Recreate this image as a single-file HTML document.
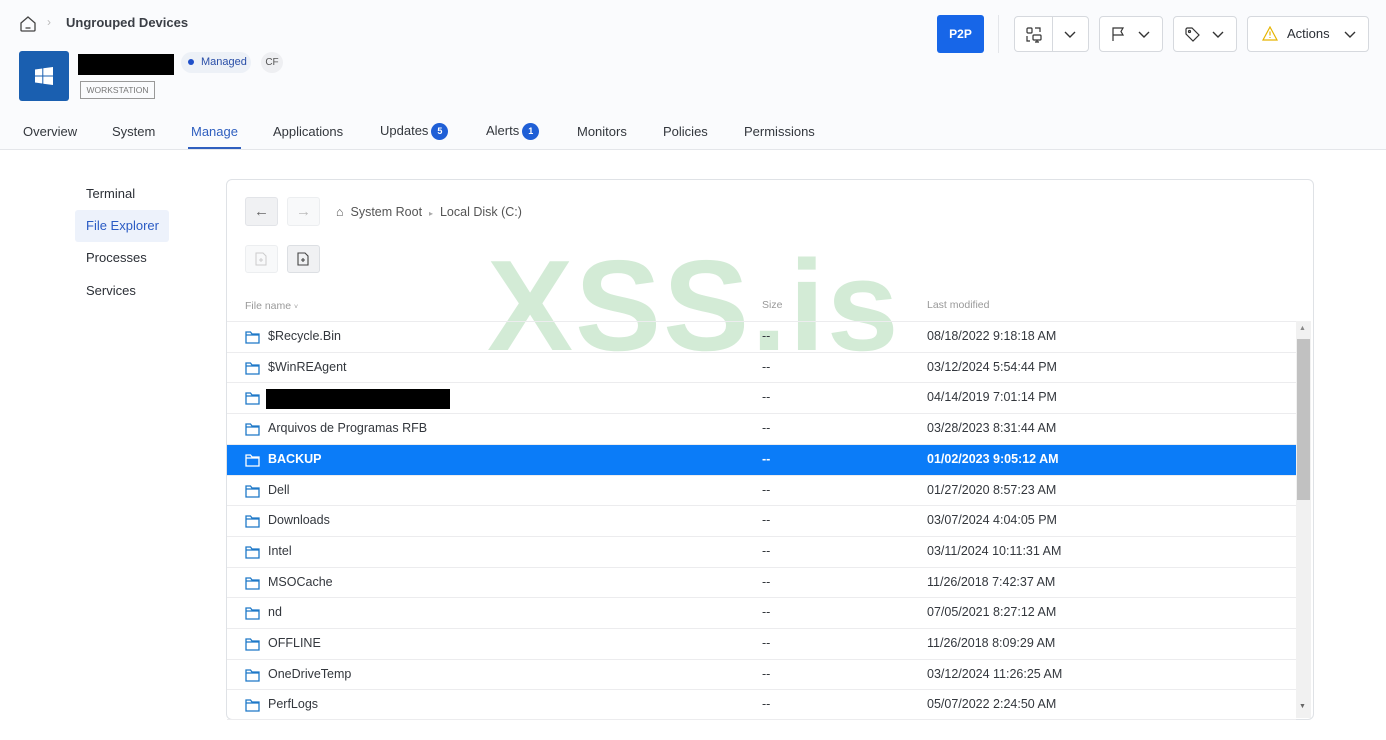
<!DOCTYPE html>
<html><head><meta charset="utf-8"><style>
*{box-sizing:border-box;margin:0;padding:0}
body{width:1386px;height:740px;overflow:hidden;background:#fff;font-family:"Liberation Sans",sans-serif;color:#2b2f36;position:relative}
.top{position:absolute;left:0;top:0;width:1386px;height:150px;background:#fafbfd;border-bottom:1px solid #e4e6ea}
.abs{position:absolute}
.btn{position:absolute;top:16px;height:36px;border:1px solid #d6d9de;border-radius:4px;background:#fff}
.tab{position:absolute;top:124px;font-size:13px;color:#33373d}
.badge{display:inline-block;width:17px;height:17px;border-radius:50%;background:#1f5fd6;color:#fff;font-size:9px;font-weight:bold;text-align:center;line-height:17px;vertical-align:middle;margin-left:3px}
.side{position:absolute;left:86px;font-size:13px;color:#2b2f36}
.panel{position:absolute;left:226px;top:179px;width:1088px;height:541px;border:1px solid #dfe2e6;border-radius:6px;background:#fff}
.row{position:absolute;left:227px;width:1069px;height:31px;border-top:1px solid #ececee;font-size:12.5px;color:#33373d}
.row span{position:absolute;top:7px}
.row svg{position:absolute;left:18px;top:8px}
.sel{background:#0b7cf8;color:#fff;font-weight:bold}
</style></head><body>
<div class="top"></div>
<svg class="abs" style="left:19px;top:15px" width="18" height="18" viewBox="0 0 18 18"><path d="M2 8 L9 2 L16 8 V15 Q16 16 15 16 H3 Q2 16 2 15 Z" fill="none" stroke="#444" stroke-width="1.3"/><path d="M6.5 13H11.5" stroke="#444" stroke-width="1.3"/></svg>
<div class="abs" style="left:47px;top:15px;font-size:12px;color:#bbb">›</div>
<div class="abs" style="left:66px;top:15px;font-size:13px;font-weight:bold;color:#3a3e45">Ungrouped Devices</div>
<div class="abs" style="left:19px;top:51px;width:50px;height:50px;border-radius:3px;background:#1a5fb0"></div>
<svg class="abs" style="left:35px;top:67px" width="18" height="18" viewBox="0 0 18 18" fill="#fff"><path d="M0 2.5L7.3 1.5V8.5H0Z M8.3 1.3L18 0V8.5H8.3Z M0 9.5H7.3V16.5L0 15.5Z M8.3 9.5H18V18L8.3 16.7Z"/></svg>
<div class="abs" style="left:78px;top:54px;width:96px;height:21px;background:#000"></div>
<div class="abs" style="left:181px;top:52px;width:70px;height:21px;border-radius:11px;background:#edf1f7;font-size:11px;color:#2a4fa8;line-height:21px;padding-left:20px">Managed</div>
<div class="abs" style="left:188px;top:59px;width:6px;height:6px;border-radius:50%;background:#1f4fc9"></div>
<div class="abs" style="left:261px;top:52px;width:22px;height:21px;border-radius:50%;background:#eeeff2;font-size:10px;color:#555;line-height:21px;text-align:center">CF</div>
<div class="abs" style="left:80px;top:81px;width:75px;height:18px;border:1px solid #999;font-size:8.5px;color:#777;line-height:16px;text-align:center">WORKSTATION</div>
<div class="abs" style="left:937px;top:15px;width:47px;height:38px;background:#1766e8;border-radius:3px;color:#fff;font-weight:bold;font-size:12px;line-height:38px;text-align:center">P2P</div>
<div class="abs" style="left:998px;top:15px;width:1px;height:38px;background:#e4e6ea"></div>
<div class="btn" style="left:1014px;width:75px"><div class="abs" style="left:37px;top:0;width:1px;height:34px;background:#d6d9de"></div>
<svg class="abs" style="left:10px;top:9px" width="18" height="18" viewBox="0 0 18 18" fill="none" stroke="#333" stroke-width="1.2"><rect x="2" y="2" width="5" height="5" rx="1"/><path d="M10 2h5v4M2 10v5h3"/><rect x="8" y="9" width="8" height="5" rx="1"/><path d="M12 14v2M10 16h4"/></svg>
<svg class="abs" style="left:49px;top:12px" width="12" height="10" viewBox="0 0 12 10"><path d="M1 3l5 5 5-5" fill="none" stroke="#333" stroke-width="1.4"/></svg></div>
<div class="btn" style="left:1099px;width:64px"><svg class="abs" style="left:10px;top:9px" width="16" height="16" viewBox="0 0 16 16" fill="none" stroke="#333" stroke-width="1.2"><path d="M3 15V2h10l-2 3.5 2 3.5H3"/></svg>
<svg class="abs" style="left:38px;top:12px" width="12" height="10" viewBox="0 0 12 10"><path d="M1 3l5 5 5-5" fill="none" stroke="#333" stroke-width="1.4"/></svg></div>
<div class="btn" style="left:1173px;width:64px"><svg class="abs" style="left:10px;top:9px" width="17" height="17" viewBox="0 0 17 17" fill="none" stroke="#333" stroke-width="1.2"><path d="M2 3V8l7 7 6-6-7-7H3Z"/><circle cx="5.5" cy="5.5" r="1"/></svg>
<svg class="abs" style="left:38px;top:12px" width="12" height="10" viewBox="0 0 12 10"><path d="M1 3l5 5 5-5" fill="none" stroke="#333" stroke-width="1.4"/></svg></div>
<div class="btn" style="left:1247px;width:122px"><svg class="abs" style="left:14px;top:9px" width="16" height="15" viewBox="0 0 16 15" fill="none" stroke="#e6b400" stroke-width="1.2"><path d="M8 1L15 14H1Z M8 5.5v4M8 11v1"/></svg>
<span class="abs" style="left:39px;top:9px;font-size:13px;color:#2b2f36">Actions</span>
<svg class="abs" style="left:96px;top:12px" width="12" height="10" viewBox="0 0 12 10"><path d="M1 3l5 5 5-5" fill="none" stroke="#333" stroke-width="1.4"/></svg></div>
<div class="tab" style="left:23px">Overview</div>
<div class="tab" style="left:112px">System</div>
<div class="tab" style="left:191px;color:#2f5fbf">Manage</div>
<div class="abs" style="left:188px;top:147px;width:53px;height:2px;background:#2f5fbf"></div>
<div class="tab" style="left:273px">Applications</div>
<div class="tab" style="left:380px;top:123px">Updates<span class="badge">5</span></div>
<div class="tab" style="left:486px;top:123px">Alerts<span class="badge">1</span></div>
<div class="tab" style="left:577px">Monitors</div>
<div class="tab" style="left:663px">Policies</div>
<div class="tab" style="left:744px">Permissions</div>
<div class="side" style="top:186px">Terminal</div>
<div class="abs" style="left:75px;top:210px;width:94px;height:32px;background:#edf2fb;border-radius:3px"></div>
<div class="side" style="top:218px;color:#2a5bc4">File Explorer</div>
<div class="side" style="top:250px">Processes</div>
<div class="side" style="top:283px">Services</div>
<div class="panel"></div>
<div class="abs" style="left:245px;top:197px;width:33px;height:29px;background:#f0f1f3;border:1px solid #e2e4e8;border-radius:3px;text-align:center;line-height:27px;color:#666;font-size:15px">←</div>
<div class="abs" style="left:287px;top:197px;width:33px;height:29px;background:#f8f9fa;border:1px solid #eceef0;border-radius:3px;text-align:center;line-height:27px;color:#bbb;font-size:15px">→</div>
<div class="abs" style="left:336px;top:205px;font-size:12.5px;color:#555">⌂&nbsp; System Root &nbsp;<span style="color:#aaa;font-size:8px">▸</span>&nbsp; Local Disk (C:)</div>
<div class="abs" style="left:245px;top:245px;width:33px;height:28px;background:#f8f9fa;border:1px solid #eceef0;border-radius:3px"></div>
<div class="abs" style="left:287px;top:245px;width:33px;height:28px;background:#f0f1f3;border:1px solid #dcdfe3;border-radius:3px"></div>
<svg class="abs" style="left:255px;top:252px" width="12" height="14" viewBox="0 0 12 14" fill="none" stroke="#ccc" stroke-width="1"><path d="M1 1h7l3 3v9H1Z M6 6v4M4 8h4"/></svg>
<svg class="abs" style="left:297px;top:252px" width="12" height="14" viewBox="0 0 12 14" fill="none" stroke="#444" stroke-width="1.1"><path d="M1 1h7l3 3v9H1Z M6 6v4M4 8h4"/></svg>
<div class="abs" style="left:487px;top:242px;font-size:129px;font-weight:bold;color:#d3ebd6;letter-spacing:2px;line-height:1.0">XSS.is</div>
<div class="abs" style="left:245px;top:300px;font-size:10.5px;color:#999">File name <span style="font-size:7px">˅</span></div>
<div class="abs" style="left:762px;top:299px;font-size:10.5px;color:#999">Size</div>
<div class="abs" style="left:927px;top:299px;font-size:10.5px;color:#999">Last modified</div>
<div id="rows"></div>
<div class="abs" style="left:227px;top:719px;width:1069px;height:1px;background:#ececee"></div>
<div class="abs" style="left:1296px;top:321px;width:15px;height:397px;background:#f1f1f1"></div>
<div class="abs" style="left:1297px;top:339px;width:13px;height:161px;background:#c1c1c1"></div>
<div class="abs" style="left:1299px;top:325px;font-size:7px;color:#888">▲</div>
<div class="abs" style="left:1299px;top:703px;font-size:7px;color:#666">▼</div>
<script>
var d=[["$Recycle.Bin","08/18/2022 9:18:18 AM"],["$WinREAgent","03/12/2024 5:54:44 PM"],["","04/14/2019 7:01:14 PM"],["Arquivos de Programas RFB","03/28/2023 8:31:44 AM"],["BACKUP","01/02/2023 9:05:12 AM"],["Dell","01/27/2020 8:57:23 AM"],["Downloads","03/07/2024 4:04:05 PM"],["Intel","03/11/2024 10:11:31 AM"],["MSOCache","11/26/2018 7:42:37 AM"],["nd","07/05/2021 8:27:12 AM"],["OFFLINE","11/26/2018 8:09:29 AM"],["OneDriveTemp","03/12/2024 11:26:25 AM"],["PerfLogs","05/07/2022 2:24:50 AM"]];
var h="";d.forEach(function(r,i){var t=321+i*30.7,s=i==4,c=s?"#fff":"#1d78c8";
h+='<div class="row'+(s?' sel':'')+'" style="top:'+t+'px"><svg width="15" height="14" viewBox="0 0 15 14" fill="none" stroke="'+c+'" stroke-width="1.3"><path d="M1 2h4.5l1.5 2H14v9H1Z M1 5h13"/></svg>'+(r[0]?'<span style="left:41px">'+r[0]+'</span>':'<div style="position:absolute;left:39px;top:6px;width:184px;height:20px;background:#000"></div>')+'<span style="left:535px">--</span><span style="left:700px">'+r[1]+'</span></div>';});
document.getElementById("rows").innerHTML=h;
</script>
</body></html>
